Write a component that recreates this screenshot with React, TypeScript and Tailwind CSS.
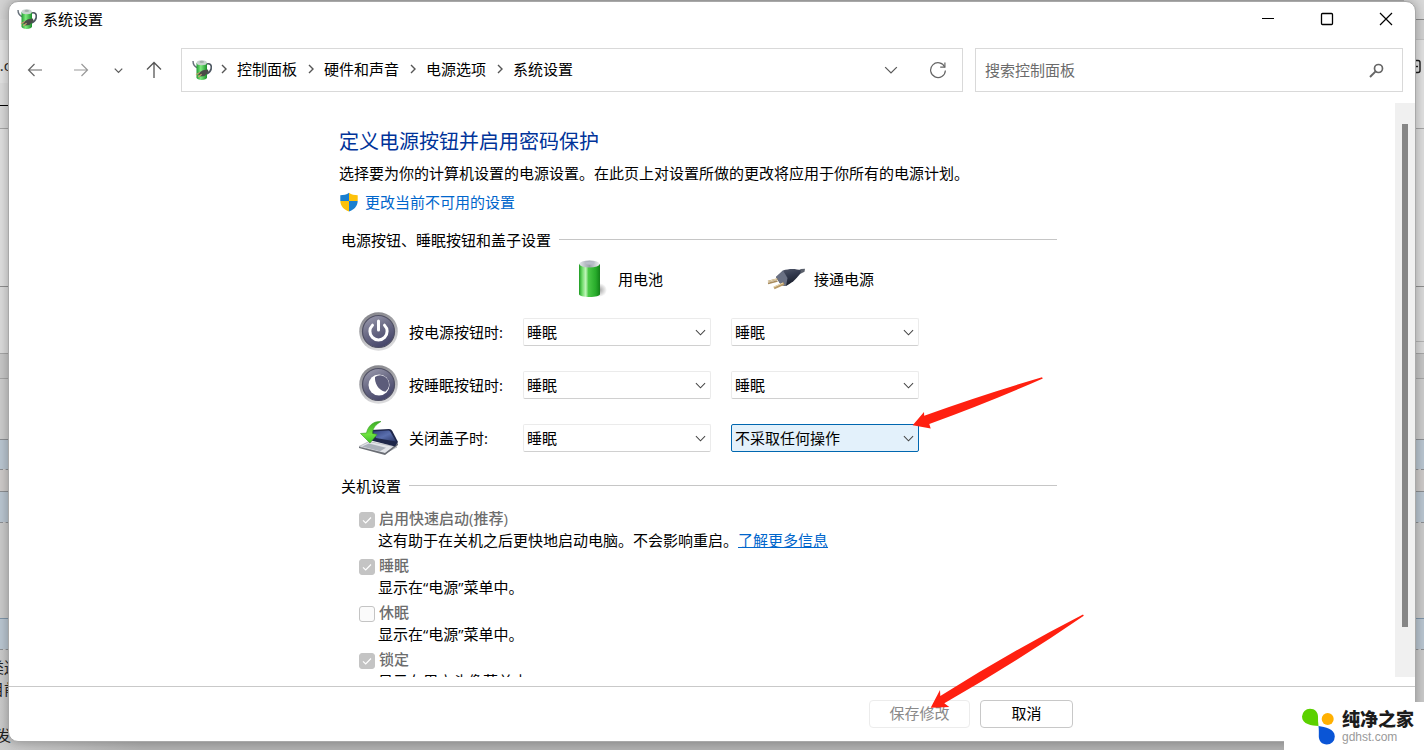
import React from "react";

const edgeBands = [
  "h-[19px] bg-[#d3d3d3]",
  "h-[21px] bg-[#d6d6d6]",
  "h-[43px] bg-[#e3e3e3]",
  "h-[22px] bg-[#dcdcdc]",
  "h-[23px] border-t border-black bg-[#d9d9d9]",
  "h-[158px] border-t border-[#a6a6a6] bg-[#e0e0e0]",
  "h-[67px] border-t border-[#8f8f8f] bg-[#dcdcdc]",
  "h-[25px] border-t border-[#a6a6a6] bg-[#c8c8c8]",
  "h-[61px] border-t border-[#a6a6a6] bg-[#cdcdcd]",
  "h-[30px] border-t border-[#8c8f93] bg-[#bac6d1]",
  "h-[22px] border-t border-dashed border-[#8c8f93] bg-[#cecbca]",
  "h-[31px] border-t border-[#8c8f93] bg-[#bac6d1]",
  "h-[96px] border-t border-dashed border-[#8c8f93] bg-[#cbcbcb]",
  "h-[31px] border-t border-[#7f95a8] bg-[#bac6d1]",
];

const rightBands = [
  "h-[19px] bg-[#d9d9d9]",
  "h-[20px] border-t border-[#8a8a8a] bg-[#d2d2d2]",
  "h-[89px] border-t border-[#c2c2c2] bg-[#e2e2e2]",
  "h-[158px] border-t border-[#a6a6a6] bg-[#dedede]",
  "h-[55px] border-t border-[#8f8f8f] bg-[#dadada]",
  "h-[12px] border-t border-[#b5b5b5] bg-[#dadada]",
  "h-[25px] border-t border-[#a6a6a6] bg-[#c6c6c6]",
  "h-[61px] border-t border-[#a6a6a6] bg-[#cdcdcd]",
  "h-[30px] border-t border-[#8c8f93] bg-[#bac6d1]",
  "h-[22px] border-t border-dashed border-[#8c8f93] bg-[#cecbca]",
  "h-[31px] border-t border-[#8c8f93] bg-[#bac6d1]",
  "h-[96px] border-t border-dashed border-[#8c8f93] bg-[#cbcbcb]",
  "h-[31px] border-t border-[#7f95a8] bg-[#bac6d1]",
];

function Backdrop() {
  return (
    <div aria-hidden="true" className="absolute inset-0 flex justify-between overflow-hidden bg-linear-to-r from-[#cbcbcb] to-[#b1b1b1] to-10%">
      <div className="relative flex w-5 flex-col overflow-hidden">
        {edgeBands.map((c, i) => (
          <div key={i} className={"shrink-0 " + c} />
        ))}
        <div className="flex-1 border-t border-dashed border-[#8c8f93]" />
        <span className="absolute top-[55px] right-[9px] text-[15px] leading-5 text-[#222]">s.c</span>
        <span className="absolute top-[657px] right-px text-[15px] leading-5 whitespace-nowrap text-[#222]">类送</span>
        <span className="absolute top-[679px] right-px text-[15px] leading-5 whitespace-nowrap text-[#222]">目前</span>
        <span className="absolute top-[725px] right-[9px] text-[15px] leading-5 whitespace-nowrap text-[#222]">发</span>
      </div>
      <div className="relative flex w-5 flex-col overflow-hidden bg-[#cbcbcb]">
        {rightBands.map((c, i) => (
          <div key={i} className={"shrink-0 " + c} />
        ))}
        <div className="flex-1 border-t border-dashed border-[#8c8f93]" />
        <svg className="absolute top-[59px] right-[3px]" width="12" height="16" viewBox="0 0 12 16" fill="none" stroke="#1c1c1c" strokeWidth="1.4">
          <rect x="0" y="1.5" width="11" height="12" rx="2" />
          <path d="M5 7.5h4" />
        </svg>
      </div>
    </div>
  );
}

function PowerPlanIcon() {
  return (
    <svg width="21" height="22" viewBox="0 0 21 22">
      <defs>
        <linearGradient id="planBody" x1="0" x2="1">
          <stop offset="0" stopColor="#1f9a33" />
          <stop offset="0.4" stopColor="#7dea7b" />
          <stop offset="1" stopColor="#1c8f2c" />
        </linearGradient>
      </defs>
      <path d="M1 2c0 4 2 6 5 7" fill="none" stroke="#66707a" strokeWidth="1.4" />
      <path d="M14.500 5c4-1 5.500 1.500 4.600 5-.6 2.500-2.200 4-4.600 5" fill="none" stroke="#4c5660" strokeWidth="1.7" />
      <path d="M4.500 4v14.500c0 1.600 2.500 2.500 5.200 2.500s5.300-.9 5.300-2.500V4z" fill="url(#planBody)" />
      <ellipse cx="9.700" cy="3.700" rx="5.200" ry="2.500" fill="#c9d3cf" />
      <ellipse cx="9.700" cy="2.900" rx="2.300" ry="1.100" fill="#a4afab" />
      <path d="M5.500 14.500l5.500-3.200 5-.8.500 2.500-4 4-4 .4z" fill="#4a4c48" />
      <path d="M4 15.800l4-2.400M6 18l3.600-2.700" stroke="#c5a26a" strokeWidth="1.1" />
    </svg>
  );
}

function ShieldIcon() {
  return (
    <svg width="18" height="20" viewBox="0 0 18 20">
      <path d="M9 .8C6.500 2.600 3.600 3.300.3 3.300V9H9z" fill="#1a7fd0" />
      <path d="M9 .8c2.500 1.800 5.400 2.500 8.700 2.500V9H9z" fill="#fdc10a" />
      <path d="M.3 9c.2 5 3.500 8.600 8.700 10.400V9z" fill="#fdc10a" />
      <path d="M17.700 9c-.2 5-3.500 8.600-8.700 10.400V9z" fill="#1a7fd0" />
    </svg>
  );
}

function BatteryIcon() {
  return (
    <svg width="30" height="40" viewBox="0 0 30 40">
      <defs>
        <linearGradient id="battBody" x1="0" x2="1">
          <stop offset="0" stopColor="#1c9a20" />
          <stop offset="0.15" stopColor="#6edb69" />
          <stop offset="0.32" stopColor="#c2f5bb" />
          <stop offset="0.45" stopColor="#4bc947" />
          <stop offset="0.8" stopColor="#27ab2a" />
          <stop offset="1" stopColor="#138019" />
        </linearGradient>
        <linearGradient id="battTop" x1="0" x2="1">
          <stop offset="0" stopColor="#e3e6ea" />
          <stop offset="0.5" stopColor="#9ba1ab" />
          <stop offset="1" stopColor="#f0f2f3" />
        </linearGradient>
        <radialGradient id="battShade">
          <stop offset="0" stopColor="#8a8a8a" stopOpacity="0.8" />
          <stop offset="1" stopColor="#8a8a8a" stopOpacity="0" />
        </radialGradient>
      </defs>
      <ellipse cx="22" cy="31" rx="8" ry="7" fill="url(#battShade)" />
      <path d="M2 5v30c0 2 4.500 3 10.500 3S23 37 23 35V5z" fill="url(#battBody)" />
      <ellipse cx="12.500" cy="5" rx="10.300" ry="3.500" fill="url(#battTop)" />
      <ellipse cx="13" cy="4" rx="4.500" ry="1.700" fill="#b9bdc9" />
    </svg>
  );
}

function PlugIcon() {
  return (
    <svg width="38" height="22" viewBox="0 0 38 22">
      <defs>
        <linearGradient id="plugBody" x1="0" y1="0" x2="0.400" y2="1">
          <stop offset="0" stopColor="#565c6e" />
          <stop offset="0.5" stopColor="#333a4e" />
          <stop offset="1" stopColor="#1a1f2c" />
        </linearGradient>
      </defs>
      <path d="M28 4l6-3 4-.3-.5 3-5 2.500z" fill="#5b606b" />
      <path d="M9 9L16 2.500c6-2 13-2 18 0l-1 3.500c-4 5.500-9 9.500-14 12l-5-1z" fill="url(#plugBody)" />
      <path d="M9 9l7-6.500 4.500 7.500-1.500 8-5-1z" fill="#6a7184" />
      <path d="M1 13.500l9.500-2.500M1 15.500l9.500-2.500" stroke="#a88b5c" strokeWidth="1.800" />
      <path d="M7 20l10-4.500" stroke="#b99a66" strokeWidth="2.600" />
      <path d="M1 13.500l9-2.500M7 19l9-4" stroke="#f0e2bd" strokeWidth="0.900" />
    </svg>
  );
}

function RoundButtonArt({ children }: { children: React.ReactNode }) {
  return (
    <svg width="40" height="40" viewBox="0 0 40 40">
      <defs>
        <linearGradient id="ringOuter" x1="0" y1="0" x2="0.300" y2="1">
          <stop offset="0" stopColor="#7c7c82" />
          <stop offset="0.6" stopColor="#b0b0b4" />
          <stop offset="1" stopColor="#dadadc" />
        </linearGradient>
        <linearGradient id="ringInner" x1="0" y1="0" x2="0.500" y2="1">
          <stop offset="0" stopColor="#a2a2b4" />
          <stop offset="0.500" stopColor="#6e6e88" />
          <stop offset="1" stopColor="#48486c" />
        </linearGradient>
      </defs>
      <circle cx="19.500" cy="19.500" r="19.300" fill="url(#ringOuter)" />
      <circle cx="19.500" cy="19.500" r="16" fill="url(#ringInner)" stroke="#505064" strokeWidth="1.200" />
      {children}
    </svg>
  );
}

function PowerButtonIcon() {
  return (
    <RoundButtonArt>
      <path d="M13.500 13.200a8.600 8.600 0 1 0 12 0" fill="none" stroke="#fff" strokeWidth="3" strokeLinecap="round" />
      <path d="M19.500 9v9" stroke="#fff" strokeWidth="3" strokeLinecap="round" />
    </RoundButtonArt>
  );
}

function SleepButtonIcon() {
  return (
    <RoundButtonArt>
      <circle cx="20" cy="20" r="10.500" fill="#fff" />
      <path d="M16 12C15.500 18 19 25 26.300 26.800A9 9 0 0 0 16 12z" fill="#5c5c7a" />
    </RoundButtonArt>
  );
}

function LidIcon() {
  return (
    <svg width="40" height="40" viewBox="0 0 40 40">
      <defs>
        <linearGradient id="lidTop" x1="0" y1="0" x2="1" y2="1">
          <stop offset="0" stopColor="#33427c" />
          <stop offset="0.500" stopColor="#5a6fae" />
          <stop offset="1" stopColor="#2a3563" />
        </linearGradient>
        <linearGradient id="lidArrow" x1="0" y1="0" x2="0" y2="1">
          <stop offset="0" stopColor="#3aad24" />
          <stop offset="0.600" stopColor="#6ee23f" />
          <stop offset="1" stopColor="#3cbf25" />
        </linearGradient>
      </defs>
      <path d="M0 28.500l10-5 28 5.500-12 6.500z" fill="#e2e4e9" stroke="#9a9da4" strokeWidth="0.600" />
      <path d="M3 28.500l7-3 17 4.200-6 3.600z" fill="#aab0ba" />
      <path d="M0 28.700v1.300l26 7L39 27v-2l-13 10z" fill="#6a6d74" />
      <path d="M12 12l18-1c1.500 0 2.500.7 3.300 2L39 24l-3 4.500-24-6z" fill="#1f274a" />
      <path d="M14 13.500l15-1c1.200 0 2 .5 2.500 1.500L37 23.500 17 20z" fill="url(#lidTop)" />
      <path d="M22 3.500C14 3 9 8 7.500 15l-6 .5L11 25l7-8.500-4.500-1C13.500 10.500 16.500 6.500 22 3.500z" fill="url(#lidArrow)" stroke="#35a020" strokeWidth="0.600" />
    </svg>
  );
}

function Chevron({ size, color = "#5c5c5c", weight = 1.1 }: { size: number; color?: string; weight?: number }) {
  return (
    <svg width={size} height={size} viewBox="0 0 12 12" fill="none" stroke={color} strokeWidth={weight}>
      <path d="M1 3.500l5 5 5-5" />
    </svg>
  );
}

function CrumbArrow() {
  return (
    <svg width="27" height="12" viewBox="0 0 27 12" fill="none" stroke="#555" strokeWidth="1.400">
      <path d="M12 2l4 4-4 4" />
    </svg>
  );
}

const crumbs = ["控制面板", "硬件和声音", "电源选项", "系统设置"];

function TitleBar() {
  return (
    <header className="flex h-[34px] items-center">
      <div className="flex flex-1 items-center gap-1 pl-2">
        <PowerPlanIcon />
        <h1 className="pl-px text-[15px] leading-5">系统设置</h1>
      </div>
      <button aria-label="最小化" className="flex h-full w-[59px] items-center justify-center">
        <svg width="14" height="14" viewBox="0 0 14 14" stroke="#000" fill="none"><path d="M1 6.500h12" /></svg>
      </button>
      <button aria-label="最大化" className="flex h-full w-[59px] items-center justify-center">
        <svg width="14" height="14" viewBox="0 0 14 14" stroke="#000" fill="none" strokeWidth="1.300"><rect x="1.500" y="1.500" width="11" height="11" rx="1" /></svg>
      </button>
      <button aria-label="关闭" className="flex h-full w-[59px] items-center justify-center">
        <svg width="14" height="14" viewBox="0 0 14 14" stroke="#000" fill="none" strokeWidth="1.200"><path d="M1 1l12 12M13 1L1 13" /></svg>
      </button>
    </header>
  );
}

function NavBar() {
  return (
    <div className="flex items-center px-3 pt-3 pb-[11px] pl-2">
      <nav className="flex items-center pr-[9px]">
        <button aria-label="后退" className="flex h-9 w-9 items-center justify-center">
          <svg width="16" height="16" viewBox="0 0 16 16" fill="none" stroke="#666" strokeWidth="1.200"><path d="M15 8H1.500M7.500 2L1.500 8l6 6" /></svg>
        </button>
        <button aria-label="前进" className="ml-[10px] flex h-9 w-9 items-center justify-center">
          <svg width="16" height="16" viewBox="0 0 16 16" fill="none" stroke="#999" strokeWidth="1.200"><path d="M1 8h13.500M8.500 2l6 6-6 6" /></svg>
        </button>
        <button aria-label="最近浏览的位置" className="ml-[5px] flex h-9 w-7 items-center justify-center">
          <Chevron size={9} weight={1.700} />
        </button>
        <button aria-label="上移" className="ml-1 flex h-9 w-9 items-center justify-center">
          <svg width="16" height="18" viewBox="0 0 16 18" fill="none" stroke="#555" strokeWidth="1.300"><path d="M8 17V1.500M1 8.500l7-7 7 7" /></svg>
        </button>
      </nav>
      <div className="flex h-11 flex-1 items-center border border-[#d9d9d9] pr-[6px] pl-[10px]">
        <PowerPlanIcon />
        <ol className="-ml-[3px] flex flex-1 items-center pb-0.5 text-[15px] leading-5">
          {crumbs.map((c) => (
            <li key={c} className="flex items-center">
              <CrumbArrow />
              <a href="#" className="whitespace-nowrap text-black">{c}</a>
            </li>
          ))}
        </ol>
        <button aria-label="以前的位置" className="flex h-9 w-9 items-center justify-center">
          <Chevron size={14} />
        </button>
        <button aria-label="刷新" className="ml-[11px] flex h-9 w-9 items-center justify-center">
          <svg width="18" height="18" viewBox="0 0 18 18" fill="none" stroke="#666" strokeWidth="1.200">
            <path d="M15.800 6.200A7.400 7.400 0 1 0 16.400 9.500" />
            <path d="M15.900 1.500v4.700h-4.700" />
          </svg>
        </button>
      </div>
      <label className="ml-3 flex h-11 w-[428px] items-center border border-[#d9d9d9] pr-[18px] pl-[9px]">
        <input
          type="search"
          aria-label="搜索控制面板"
          placeholder="搜索控制面板"
          className="min-w-0 flex-1 bg-transparent text-[15px] leading-5 outline-none placeholder:text-[#6b6b6b]"
        />
        <svg width="15" height="15" viewBox="0 0 15 15" fill="none" stroke="#666" strokeWidth="1.700">
          <circle cx="9.500" cy="5.500" r="4" />
          <path d="M6.600 8.400L1 14" strokeWidth="2" />
        </svg>
      </label>
    </div>
  );
}

function SectionTitle({ children }: { children: string }) {
  return (
    <div className="flex items-center gap-2 pr-2 pl-0.5">
      <h3 className="text-[15px] leading-5">{children}</h3>
      <div className="mb-0.5 h-px flex-1 bg-[#c6c6c6]" />
    </div>
  );
}

function PowerSelect({ label, value, active = false }: { label: string; value: string; active?: boolean }) {
  return (
    <div className="relative h-7">
      <select
        aria-label={label}
        defaultValue={value}
        className={
          active
            ? "h-7 w-full appearance-none rounded-xs border border-[#0067b0] bg-[#e3f1fb] pr-6 pl-[3px] text-[15px] outline-none"
            : "h-7 w-full appearance-none rounded-xs border border-[#ebebeb] border-b-[#d0d0d0] bg-white pr-6 pl-[3px] text-[15px] outline-none"
        }
      >
        <option>不采取任何操作</option>
        <option>睡眠</option>
      </select>
      <span className="pointer-events-none absolute inset-y-0 right-[5px] flex items-center">
        <Chevron size={11} color="#444" />
      </span>
      {active && (
        <svg aria-hidden="true" className="pointer-events-none absolute right-[-125px] bottom-[22px]" width="132" height="54" viewBox="912 376 132 54">
          <path d="M912.700 425.300L924 412l.2 3.700Q985 394 1042 377.300l.8 1.200Q990 402 929.300 424l1.400 4.500z" fill="#ff2010" />
        </svg>
      )}
    </div>
  );
}

const actions = [
  { label: "按电源按钮时:", icon: <PowerButtonIcon />, battery: "睡眠", plugged: "睡眠", active: false },
  { label: "按睡眠按钮时:", icon: <SleepButtonIcon />, battery: "睡眠", plugged: "睡眠", active: false },
  { label: "关闭盖子时:", icon: <LidIcon />, battery: "睡眠", plugged: "不采取任何操作", active: true },
];

const shutdown = [
  { id: "fast", label: "启用快速启动(推荐)", text: "这有助于在关机之后更快地启动电脑。不会影响重启。", link: "了解更多信息", on: true },
  { id: "sleep", label: "睡眠", text: "显示在“电源”菜单中。", on: true },
  { id: "hibernate", label: "休眠", text: "显示在“电源”菜单中。", on: false },
  { id: "lock", label: "锁定", text: "显示在用户头像菜单中。", on: true },
];

function Content() {
  return (
    <main className="flex min-h-0 flex-1">
      <div className="flex-1 overflow-hidden">
        <div className="mx-auto w-[726px] max-w-full pt-[25px] text-[15px] leading-5">
          <h2 className="text-[20px] leading-7 text-[#003399]">定义电源按钮并启用密码保护</h2>
          <p className="mt-[7px]">选择要为你的计算机设置的电源设置。在此页上对设置所做的更改将应用于你所有的电源计划。</p>
          <a href="#" className="mt-[9px] flex w-fit items-center gap-[7px] pl-px text-[#0066cc]">
            <ShieldIcon />
            更改当前不可用的设置
          </a>

          <div className="mt-[18px]">
            <SectionTitle>电源按钮、睡眠按钮和盖子设置</SectionTitle>
          </div>
          <div className="mt-[9px] grid grid-cols-[164px_188px_208px] items-center gap-y-[13px] pl-5">
            <div />
            <div className="flex h-10 items-center gap-[11px] pl-[54px]">
              <BatteryIcon />
              用电池
            </div>
            <div className="flex h-10 items-center gap-[9px] pl-14">
              <PlugIcon />
              <span className="whitespace-nowrap">接通电源</span>
            </div>
            {actions.map((a) => (
              <React.Fragment key={a.label}>
                <div className="flex h-10 items-center gap-[10px]">
                  {a.icon}
                  <span className="whitespace-nowrap">{a.label}</span>
                </div>
                <PowerSelect label={a.label + " 用电池"} value={a.battery} />
                <div className="pl-5">
                  <PowerSelect label={a.label + " 接通电源"} value={a.plugged} active={a.active} />
                </div>
              </React.Fragment>
            ))}
          </div>

          <div className="mt-[18px]">
            <SectionTitle>关机设置</SectionTitle>
          </div>
          <ul className="mt-[13px] flex flex-col gap-[5px] pl-5 leading-[21px]">
            {shutdown.map((s) => (
              <li key={s.id}>
                <div className="flex h-[21px] items-start gap-1">
                  <span className="relative mt-[3px] flex h-4 w-4">
                    <input
                      id={s.id}
                      type="checkbox"
                      disabled
                      defaultChecked={s.on}
                      className="h-4 w-4 appearance-none rounded-[3px] border border-[#c4c4c4] bg-[#fbfbfb] checked:bg-[#c4c4c4]"
                    />
                    {s.on && (
                      <svg className="pointer-events-none absolute inset-0" width="16" height="16" viewBox="0 0 16 16" fill="none" stroke="#fff" strokeWidth="1.200">
                        <path d="M4 8.300l2.700 2.700L12 5.500" />
                      </svg>
                    )}
                  </span>
                  <label htmlFor={s.id} className="leading-[19px] font-medium text-[#6d6d6d]">{s.label}</label>
                </div>
                <p className="pl-[19px]">
                  {s.text}
                  {s.link && (
                    <a href="#" className="text-[#0066cc] underline">{s.link}</a>
                  )}
                </p>
              </li>
            ))}
          </ul>
        </div>
      </div>
      <div className="flex w-5 flex-col items-center bg-[#f0f0f0] pt-[21px]">
        <div className="h-[503px] max-h-full w-[6px] bg-[#868686]" />
      </div>
    </main>
  );
}

function Footer() {
  return (
    <footer className="mt-[9px] border-t border-[#c9c9c9]">
      <div className="mx-auto flex h-[54px] w-[722px] max-w-full justify-end gap-[10px] pt-[13px] text-[15px]">
        <div className="relative h-7">
          <button disabled className="h-7 w-[101px] rounded-sm border border-[#ececec] pb-0.5 text-[#8a8a8a]">保存修改</button>
          <svg aria-hidden="true" className="pointer-events-none absolute bottom-[18px] left-[61px]" width="156" height="98" viewBox="930 612 156 98">
            <path d="M930.700 707.700L940 690l.3 6Q1010 652 1083 614.500l.8 1.200Q1015 663 944.300 703.300l5 3.700z" fill="#ff2010" />
          </svg>
        </div>
        <button className="h-7 w-[93px] rounded-sm border border-[#c8c8c8] pb-0.5">取消</button>
      </div>
    </footer>
  );
}

function SiteMark() {
  return (
    <div className="absolute right-0 bottom-0 flex h-12 w-[140px] items-center gap-[6px] bg-white pl-[18px]">
      <svg width="34" height="37" viewBox="0 0 34 37">
        <path d="M16.500 18C10 17.500 0 16.500 0 8.500A8 8 0 0 1 8 .8c5 0 8 3.500 8 8 0 3 0 6 .5 9.200z" fill="#5bd100" />
        <circle cx="25.700" cy="11" r="6" fill="#ffb000" />
        <path d="M16.500 18c6.500 1 16.300 2.500 16.300 10.500a8 8 0 0 1-8 8c-4.800 0-8-3.600-8-8 0-3.500.2-7-.3-10.500z" fill="#0a55d6" />
      </svg>
      <div className="flex flex-col pt-px">
        <span className="text-[18px] leading-5 font-black whitespace-nowrap text-[#1c1c1c]">纯净之家</span>
        <span className="font-['Liberation_Sans',sans-serif] text-[12px] leading-4 text-[#9a9a9a]">gdhst.com</span>
      </div>
    </div>
  );
}

export default function App() {
  return (
    <div className="relative h-screen overflow-hidden px-2 pt-px pb-2 font-['Open_Sans','Noto_Sans_CJK_SC',sans-serif] text-black">
      <Backdrop />
      <div className="relative flex h-full flex-col overflow-hidden rounded-[10px] border border-[#a8a8a8] bg-white shadow-[0_0_12px_rgba(0,0,0,0.3)]">
        <TitleBar />
        <NavBar />
        <Content />
        <Footer />
      </div>
      <SiteMark />
    </div>
  );
}
